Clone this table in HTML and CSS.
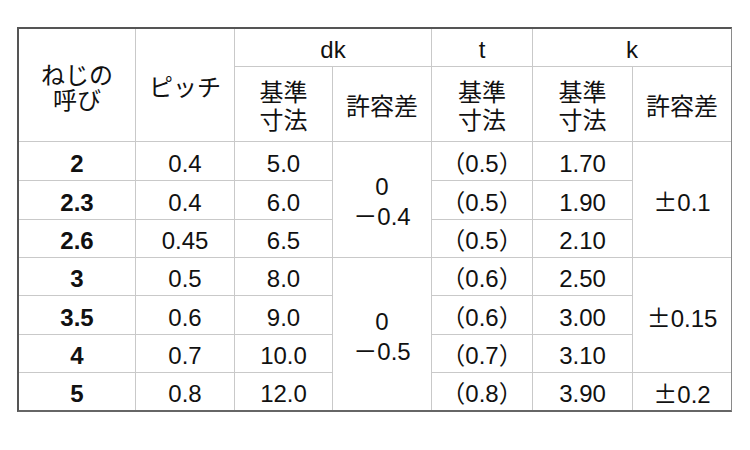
FILE: index.html
```html
<!DOCTYPE html>
<html lang="ja">
<head>
<meta charset="utf-8">
<title>ねじの呼び</title>
<link rel="stylesheet" href="styles.css">
</head>
<body>
<div class="sheet">
  <div class="grid">
    <div class="cell h-name"><div class="tight">ねじの<br>呼び</div></div>
    <div class="cell h-pitch">ピッチ</div>
    <div class="cell h-dk">dk</div>
    <div class="cell h-t">t</div>
    <div class="cell h-k">k</div>
    <div class="cell c3 r2"><div>基準<br>寸法</div></div>
    <div class="cell c4 r2">許容差</div>
    <div class="cell c5 r2"><div>基準<br>寸法</div></div>
    <div class="cell c6 r2"><div>基準<br>寸法</div></div>
    <div class="cell c7 r2">許容差</div>

    <div class="cell c1 bold">2</div>
    <div class="cell c2">0.4</div>
    <div class="cell c3">5.0</div>
    <div class="cell tol-a"><div>0<br><span class="minus">－</span>0.4</div></div>
    <div class="cell c5">（0.5）</div>
    <div class="cell c6">1.70</div>
    <div class="cell ktol-a"><div><span class="pm">±</span>0.1</div></div>

    <div class="cell c1 bold">2.3</div>
    <div class="cell c2">0.4</div>
    <div class="cell c3">6.0</div>
    <div class="cell c5">（0.5）</div>
    <div class="cell c6">1.90</div>

    <div class="cell c1 bold">2.6</div>
    <div class="cell c2">0.45</div>
    <div class="cell c3">6.5</div>
    <div class="cell c5">（0.5）</div>
    <div class="cell c6">2.10</div>

    <div class="cell c1 bold">3</div>
    <div class="cell c2">0.5</div>
    <div class="cell c3">8.0</div>
    <div class="cell tol-b"><div>0<br><span class="minus">－</span>0.5</div></div>
    <div class="cell c5">（0.6）</div>
    <div class="cell c6">2.50</div>
    <div class="cell ktol-b"><div><span class="pm">±</span>0.15</div></div>

    <div class="cell c1 bold">3.5</div>
    <div class="cell c2">0.6</div>
    <div class="cell c3">9.0</div>
    <div class="cell c5">（0.6）</div>
    <div class="cell c6">3.00</div>

    <div class="cell c1 bold">4</div>
    <div class="cell c2">0.7</div>
    <div class="cell c3">10.0</div>
    <div class="cell c5">（0.7）</div>
    <div class="cell c6">3.10</div>

    <div class="cell c1 bold">5</div>
    <div class="cell c2">0.8</div>
    <div class="cell c3">12.0</div>
    <div class="cell c5">（0.8）</div>
    <div class="cell c6">3.90</div>
    <div class="cell c7"><div><span class="pm">±</span>0.2</div></div>
  </div>
</div>
</body>
</html>
```

FILE: styles.css
```css
html, body {
  margin: 0;
  padding: 0;
  background: #ffffff;
}

.sheet {
  padding: 27px 0 0 17px;
}

.grid {
  display: inline-grid;
  grid-template-columns: 116px 98px 97px 98px 100px 99px 98px;
  grid-template-rows: 37px 74px 38px 38px 37px 37px 38px 37px 37px;
  gap: 1px;
  background: #c9c9c9;
  border-left: 2px solid #555555;
  border-top: 2px solid #555555;
  border-right: 1px solid #8a8a8a;
  border-bottom: 2px solid #666666;
  font-family: "Liberation Sans", "Noto Sans CJK JP", sans-serif;
  font-size: 24px;
  color: #111111;
}

.cell {
  background: #ffffff;
  display: flex;
  align-items: center;
  justify-content: center;
  text-align: center;
  line-height: 28px;
  padding-top: 5px;
  box-sizing: border-box;
  white-space: nowrap;
}

.tight {
  line-height: 25px;
}

.bold {
  font-weight: bold;
}

.h-name { grid-column: 1; grid-row: 1 / span 2; }
.h-pitch { grid-column: 2; grid-row: 1 / span 2; }
.h-dk { grid-column: 3 / span 2; grid-row: 1; }
.h-t { grid-column: 5; grid-row: 1; }
.h-k { grid-column: 6 / span 2; grid-row: 1; }

.r2 { grid-row: 2; }
.c1 { grid-column: 1; }
.c2 { grid-column: 2; }
.c3 { grid-column: 3; }
.c4 { grid-column: 4; }
.c5 { grid-column: 5; }
.c6 { grid-column: 6; }
.c7 { grid-column: 7; }

.tol-a { grid-column: 4; grid-row: 3 / span 3; }
.tol-b { grid-column: 4; grid-row: 6 / span 4; }
.ktol-a { grid-column: 7; grid-row: 3 / span 3; }
.ktol-b { grid-column: 7; grid-row: 6 / span 3; }

.minus {
  font-family: "Noto Sans CJK JP", sans-serif;
}

.pm {
  font-family: "Noto Sans CJK JP", sans-serif;
  font-variant-east-asian: full-width;
}
```
